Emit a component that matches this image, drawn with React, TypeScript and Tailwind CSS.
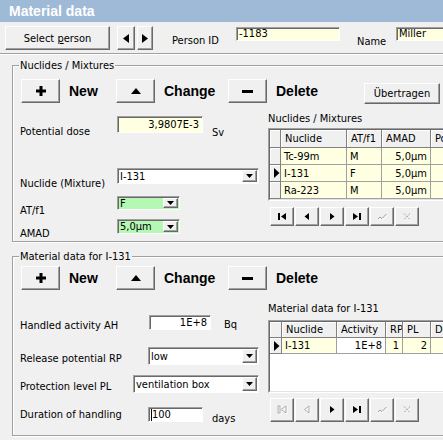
import React from 'react';

// classic win32 bevels
const raised =
  'border border-t-white border-l-white border-b-[#696969] border-r-[#696969] shadow-[inset_-1px_-1px_0_#a0a0a0] bg-[#f0f0f0]';
const sunken =
  'border border-t-[#a0a0a0] border-l-[#a0a0a0] border-b-white border-r-white shadow-[inset_1px_1px_0_#696969]';
const headCell =
  'border-r border-b border-r-[#808080] border-b-[#808080] shadow-[inset_1px_1px_0_white] bg-[#f0f0f0] px-[4px] flex items-center overflow-hidden whitespace-nowrap';
const dataCell =
  'border-r border-b border-[#a0a0a0] px-[3px] flex items-center overflow-hidden whitespace-nowrap';

function DropButton() {
  return (
    <div className={`${raised} w-[15px] my-[1px] mr-[1px] flex items-center justify-center shrink-0`}>
      <svg width="7" height="4" viewBox="0 0 7 4" className="shrink-0">
        <path d="M0 0h7L3.5 4z" fill="#000" />
      </svg>
    </div>
  );
}

function Combo({ className, text }: { className: string; text: string }) {
  return (
    <div className={`${sunken} ${className} flex shrink-0`}>
      <div className="flex-1 flex items-center pl-[2px] whitespace-nowrap overflow-hidden">{text}</div>
      <DropButton />
    </div>
  );
}

function PlusIcon() {
  return (
    <svg width="10" height="10" viewBox="0 0 10 10" className="shrink-0">
      <path d="M3.5 0h3v3.5H10v3H6.5V10h-3V6.5H0v-3h3.5z" fill="#000" />
    </svg>
  );
}

function UpIcon() {
  return (
    <svg width="10" height="6" viewBox="0 0 10 6" className="shrink-0">
      <path d="M0 6L5 0l5 6z" fill="#000" />
    </svg>
  );
}

function MinusIcon() {
  return (
    <svg width="11" height="3" viewBox="0 0 11 3" className="shrink-0">
      <rect width="11" height="3" fill="#000" />
    </svg>
  );
}

function ActionGroup({ icon, label, className }: { icon: React.ReactNode; label: string; className: string }) {
  return (
    <div className={`flex items-center shrink-0 ${className}`}>
      <div className={`${raised} w-[39px] h-[24px] flex items-center justify-center shrink-0`}>{icon}</div>
      <span className="ml-[9px] font-['Liberation_Sans',Arial,sans-serif] font-bold text-[14px] leading-[16px]">
        {label}
      </span>
    </div>
  );
}

type Glyph = 'first' | 'prior' | 'next' | 'last' | 'post' | 'cancel';

function NavGlyph({ kind, off }: { kind: Glyph; off: boolean }) {
  const shape = (dx: number, dy: number, color: string, fill: boolean) => {
    const f = fill ? color : 'none';
    const s = fill ? 'none' : color;
    const t = `translate(${dx} ${dy})`;
    switch (kind) {
      case 'first':
        return (
          <g transform={t}>
            <rect x="1" y="1" width="2" height="7" fill={f} stroke={s} strokeWidth="0.8" />
            <path d="M9 1L4 4.5 9 8z" fill={f} stroke={s} strokeWidth="0.8" />
          </g>
        );
      case 'prior':
        return (
          <g transform={t}>
            <path d="M7 1L2.5 4.5 7 8z" fill={f} stroke={s} strokeWidth="0.8" />
          </g>
        );
      case 'next':
        return (
          <g transform={t}>
            <path d="M3 1l4.5 3.5L3 8z" fill={f} />
          </g>
        );
      case 'last':
        return (
          <g transform={t}>
            <path d="M1 1l5 3.5L1 8z" fill={f} />
            <rect x="7" y="1" width="2" height="7" fill={f} />
          </g>
        );
      case 'post':
        return (
          <g transform={t}>
            <path d="M1 7l2-2 2 1.5L9.5 2" fill="none" stroke={color} strokeWidth="1" />
          </g>
        );
      case 'cancel':
        return (
          <g transform={t}>
            <path d="M2 1.5l6 6M8 1.5l-6 6" fill="none" stroke={color} strokeWidth="1" strokeDasharray="2 1" />
          </g>
        );
    }
  };
  return (
    <svg width="11" height="10" viewBox="0 0 11 10" className="shrink-0">
      {off ? (
        <>
          {shape(1, 1, '#ffffff', false)}
          {shape(0, 0, '#a0a0a0', false)}
        </>
      ) : (
        shape(0, 0, '#000', true)
      )}
    </svg>
  );
}

function Navigator({ height, disabled }: { height: string; disabled: Glyph[] }) {
  const kinds: Glyph[] = ['first', 'prior', 'next', 'last', 'post', 'cancel'];
  return (
    <div className="flex gap-[1px] ml-[2px]">
      {kinds.map((k) => (
        <div key={k} className={`${raised} w-[24px] ${height} flex items-center justify-center shrink-0`}>
          <NavGlyph kind={k} off={disabled.includes(k)} />
        </div>
      ))}
    </div>
  );
}

function RowMarker() {
  return (
    <svg width="6" height="10" viewBox="0 0 6 10" className="shrink-0">
      <path d="M0 0l5.5 5L0 10z" fill="#000" />
    </svg>
  );
}

function NuclideGrid() {
  const rows = [
    { n: 'Tc-99m', at: 'M', amad: '5,0µm', cur: false },
    { n: 'I-131', at: 'F', amad: '5,0µm', cur: true },
    { n: 'Ra-223', at: 'M', amad: '5,0µm', cur: false },
  ];
  return (
    <div className="border border-t-[#a0a0a0] border-l-[#a0a0a0] border-b-white border-r-white w-[240px]">
      <div className="border border-t-[#696969] border-l-[#696969] border-b-[#e3e3e3] border-r-[#e3e3e3] bg-[#ffffe1]">
        <div className="grid grid-cols-[11px_66px_35px_49px_70px] grid-rows-[18px_17px_17px_17px]">
          <div className={headCell} />
          <div className={headCell}>Nuclide</div>
          <div className={headCell}>AT/f1</div>
          <div className={headCell}>AMAD</div>
          <div className={headCell}>Pot. dose</div>
          {rows.map((r) => (
            <React.Fragment key={r.n}>
              <div className={`${headCell} px-[1px]`}>{r.cur && <RowMarker />}</div>
              <div className={dataCell}>{r.n}</div>
              <div className={dataCell}>{r.at}</div>
              <div className={`${dataCell} justify-end`}>{r.amad}</div>
              <div className={dataCell} />
            </React.Fragment>
          ))}
        </div>
      </div>
    </div>
  );
}

function MaterialGrid() {
  return (
    <div className="border border-t-[#a0a0a0] border-l-[#a0a0a0] border-b-white border-r-white w-[240px] h-[73px]">
      <div className="border border-t-[#696969] border-l-[#696969] border-b-[#e3e3e3] border-r-[#e3e3e3] bg-white h-full">
        <div className="grid grid-cols-[12px_55px_49px_17px_28px_60px] grid-rows-[16px_16px]">
          <div className={headCell} />
          <div className={headCell}>Nuclide</div>
          <div className={headCell}>Activity</div>
          <div className={`${headCell} px-[1px]`}>RP</div>
          <div className={`${headCell} px-[2px]`}>PL</div>
          <div className={`${headCell} px-[2px]`}>Duration</div>
          <div className={`${headCell} px-[1px]`}>
            <RowMarker />
          </div>
          <div className={`${dataCell} bg-[#ffffe1]`}>I-131</div>
          <div className={`${dataCell} justify-end`}>1E+8</div>
          <div className={`${dataCell} bg-[#ffffe1] justify-end`}>1</div>
          <div className={`${dataCell} bg-[#ffffe1] justify-end`}>2</div>
          <div className={`${dataCell} bg-[#ffffe1]`} />
        </div>
      </div>
    </div>
  );
}

function GroupBox({ title, className, children }: { title: string; className: string; children: React.ReactNode }) {
  return (
    <div
      className={`relative ml-[12px] w-[440px] border border-[#a0a0a0] shadow-[inset_1px_1px_0_white,1px_1px_0_white] ${className}`}
    >
      <span className="absolute left-[6px] -top-[7px] px-[1px] bg-[#f0f0f0] whitespace-nowrap">{title}</span>
      {children}
    </div>
  );
}

export default function App() {
  return (
    <div className="w-[443px] h-[440px] overflow-hidden bg-[#f0f0f0] text-black font-['DejaVu_Sans_Condensed','Liberation_Sans',sans-serif] text-[11px] leading-[13px]">
      {/* caption */}
      <div className="h-[22px] bg-[#9fbad7] flex items-center pl-[9px]">
        <span className="font-['Liberation_Sans',Arial,sans-serif] font-bold text-[14px] text-white">Material data</span>
      </div>

      {/* person toolbar */}
      <div className="h-[31px] flex items-start">
        <div className={`${raised} ml-[5px] mt-[4px] w-[105px] h-[24px] flex items-center justify-center shrink-0`}>
          <span>
            Select <span className="underline">p</span>erson
          </span>
        </div>
        <div className={`${raised} ml-[7px] mt-[4px] w-[18px] h-[24px] flex items-center justify-center shrink-0`}>
          <svg width="6" height="9" viewBox="0 0 6 9" className="shrink-0">
            <path d="M6 0L0 4.5 6 9z" fill="#000" />
          </svg>
        </div>
        <div className={`${raised} ml-[2px] mt-[4px] w-[16px] h-[24px] flex items-center justify-center shrink-0`}>
          <svg width="6" height="9" viewBox="0 0 6 9" className="shrink-0">
            <path d="M0 0l6 4.5L0 9z" fill="#000" />
          </svg>
        </div>
        <span className="ml-[19px] mt-[12px] w-[64px] shrink-0 whitespace-nowrap">Person ID</span>
        <div className={`${sunken} mt-[5px] w-[104px] h-[14px] bg-[#ffffe1] pl-[2px] leading-[12px] shrink-0`}>-1183</div>
        <span className="ml-[17px] mt-[13px] w-[39px] shrink-0">Name</span>
        <div className={`${sunken} mt-[5px] w-[60px] h-[14px] bg-[#ffffe1] pl-[2px] leading-[12px] shrink-0`}>Miller</div>
      </div>
      <div className="h-px bg-[#a0a0a0]" />
      <div className="h-px bg-white" />

      {/* nuclides / mixtures */}
      <GroupBox title="Nuclides / Mixtures" className="mt-[10px] h-[177px]">
        <div className="flex items-start mt-[13px]">
          <ActionGroup icon={<PlusIcon />} label="New" className="ml-[8px] w-[95px]" />
          <ActionGroup icon={<UpIcon />} label="Change" className="w-[112px]" />
          <ActionGroup icon={<MinusIcon />} label="Delete" className="w-[136px]" />
          <div className={`${raised} mt-[4px] w-[76px] h-[21px] flex items-center justify-center shrink-0`}>Übertragen</div>
        </div>
        <div className="flex mt-[8px]">
          <div className="ml-[7px] w-[248px] shrink-0 pt-[4px]">
            <div className="flex h-[17px]">
              <span className="w-[97px] pt-[9px] shrink-0 whitespace-nowrap">Potential dose</span>
              <div className={`${sunken} w-[86px] h-[17px] bg-[#ffffe1] flex items-center justify-end pr-[3px] shrink-0`}>
                3,9807E-3
              </div>
              <span className="ml-[9px] pt-[10px]">Sv</span>
            </div>
            <div className="flex h-[16px] mt-[35px]">
              <span className="w-[97px] pt-[9px] shrink-0 whitespace-nowrap">Nuclide (Mixture)</span>
              <Combo className="w-[142px] h-[16px] bg-white" text="I-131" />
            </div>
            <div className="flex h-[14px] mt-[12px]">
              <span className="w-[97px] pt-[8px] shrink-0">AT/f1</span>
              <Combo className="w-[63px] h-[14px] bg-[#b4f8b4]" text="F" />
            </div>
            <div className="flex h-[15px] mt-[9px]">
              <span className="w-[97px] pt-[8px] shrink-0">AMAD</span>
              <Combo className="w-[63px] h-[15px] bg-[#b4f8b4]" text="5,0µm" />
            </div>
          </div>
          <div className="flex flex-col">
            <span className="whitespace-nowrap">Nuclides / Mixtures</span>
            <div className="mt-[3px]">
              <NuclideGrid />
            </div>
            <div className="mt-[6px]">
              <Navigator height="h-[19px]" disabled={['post', 'cancel']} />
            </div>
          </div>
        </div>
      </GroupBox>

      {/* material data */}
      <GroupBox title="Material data for I-131" className="mt-[14px] h-[180px]">
        <div className="flex items-start mt-[9px]">
          <ActionGroup icon={<PlusIcon />} label="New" className="ml-[8px] w-[95px]" />
          <ActionGroup icon={<UpIcon />} label="Change" className="w-[112px]" />
          <ActionGroup icon={<MinusIcon />} label="Delete" className="w-[136px]" />
        </div>
        <div className="flex mt-[12px]">
          <div className="ml-[7px] w-[248px] shrink-0 pt-[13px]">
            <div className="flex h-[15px]">
              <span className="w-[129px] pt-[4px] shrink-0 whitespace-nowrap">Handled activity AH</span>
              <div className={`${sunken} w-[62px] h-[15px] bg-white flex items-center justify-end pr-[3px] shrink-0`}>1E+8</div>
              <span className="ml-[13px] pt-[3px]">Bq</span>
            </div>
            <div className="flex h-[18px] mt-[17px]">
              <span className="w-[128px] pt-[5px] shrink-0 whitespace-nowrap">Release potential RP</span>
              <Combo className="w-[111px] h-[18px] bg-white" text="low" />
            </div>
            <div className="flex h-[18px] mt-[10px]">
              <span className="w-[113px] pt-[5px] shrink-0 whitespace-nowrap">Protection level PL</span>
              <Combo className="w-[126px] h-[18px] bg-white" text="ventilation box" />
            </div>
            <div className="flex h-[15px] mt-[14px]">
              <span className="w-[128px] pt-[1px] shrink-0 whitespace-nowrap">Duration of handling</span>
              <div className={`${sunken} w-[55px] h-[15px] bg-white flex items-center pl-[2px] shrink-0`}>
                <span className="w-px h-[12px] bg-black shrink-0" />
                <span>100</span>
              </div>
              <span className="ml-[9px] pt-[5px]">days</span>
            </div>
          </div>
          <div className="flex flex-col">
            <span className="whitespace-nowrap">Material data for I-131</span>
            <div className="mt-[5px]">
              <MaterialGrid />
            </div>
            <div className="mt-[5px]">
              <Navigator height="h-[24px]" disabled={['first', 'prior', 'post', 'cancel']} />
            </div>
          </div>
        </div>
      </GroupBox>
    </div>
  );
}
